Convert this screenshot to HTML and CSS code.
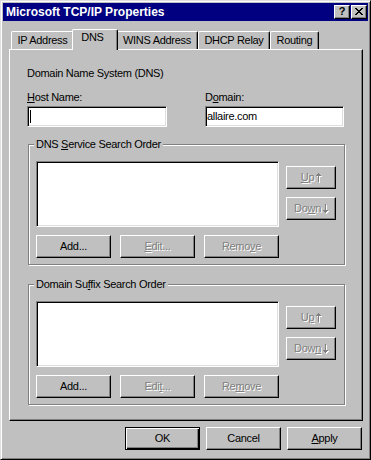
FILE: index.html
```html
<!DOCTYPE html>
<html lang="en">
<head>
  <meta charset="UTF-8" />
  <title>Microsoft TCP/IP Properties</title>
  <link rel="stylesheet" href="styles.css">
</head>
<body>
  <div class="window">
    <div class="titlebar">
      <span class="title">Microsoft TCP/IP Properties</span>
      <div class="title-buttons">
        <span class="title-btn help">?</span>
        <span class="title-btn close">
          <svg width="8" height="7" viewBox="0 0 8 7"><path fill="#000" d="M0 0h2v1H0zM6 0h2v1H6zM1 1h2v1H1zM5 1h2v1H5zM2 2h4v1H2zM3 3h2v1H3zM2 4h4v1H2zM1 5h2v1H1zM5 5h2v1H5zM0 6h2v1H0zM6 6h2v1H6z"/></svg>
        </span>
      </div>
    </div>

    <div class="content">
      <div class="tabs">
        <div class="tab tab-ip">IP Address</div>
        <div class="tab tab-dns active">DNS</div>
        <div class="tab tab-wins">WINS Address</div>
        <div class="tab tab-dhcp">DHCP Relay</div>
        <div class="tab tab-routing">Routing</div>
      </div>

      <div class="panel">
        <div class="section-title">Domain Name System (DNS)</div>
        <div class="fields">
          <div class="field">
            <label><u>H</u>ost Name:</label>
            <div class="sunken edit"><span class="caret"></span></div>
          </div>
          <div class="field">
            <label>D<u>o</u>main:</label>
            <div class="sunken edit">allaire.com</div>
          </div>
        </div>

        <div class="group">
          <span class="group-title">DNS <u>S</u>ervice Search Order</span>
          <div class="group-body">
            <div class="sunken listbox"></div>
            <div class="side-buttons">
              <button class="btn btn-side" disabled><u>U</u>p<svg class="arrow" width="5" height="9" viewBox="0 0 5 9"><path d="M2 0h1v9H2zM1 1h3v1H1zM0 2h5v1H0z"/></svg></button>
              <button class="btn btn-side" disabled>Do<u>w</u>n<svg class="arrow" width="5" height="9" viewBox="0 0 5 9"><path d="M2 0h1v9H2zM1 7h3v1H1zM0 6h5v1H0z"/></svg></button>
            </div>
            <div class="row-buttons">
              <button class="btn">Add...</button>
              <button class="btn" disabled><u>E</u>dit...</button>
              <button class="btn" disabled>Remo<u>v</u>e</button>
            </div>
          </div>
        </div>

        <div class="group group-second">
          <span class="group-title">Domain Su<u>f</u>fix Search Order</span>
          <div class="group-body">
            <div class="sunken listbox"></div>
            <div class="side-buttons">
              <button class="btn btn-side" disabled>U<u>p</u><svg class="arrow" width="5" height="9" viewBox="0 0 5 9"><path d="M2 0h1v9H2zM1 1h3v1H1zM0 2h5v1H0z"/></svg></button>
              <button class="btn btn-side" disabled>Dow<u>n</u><svg class="arrow" width="5" height="9" viewBox="0 0 5 9"><path d="M2 0h1v9H2zM1 7h3v1H1zM0 6h5v1H0z"/></svg></button>
            </div>
            <div class="row-buttons">
              <button class="btn">Add...</button>
              <button class="btn" disabled>Edi<u>t</u>...</button>
              <button class="btn" disabled>Re<u>m</u>ove</button>
            </div>
          </div>
        </div>
      </div>

      <div class="footer">
        <button class="btn default">OK</button>
        <button class="btn">Cancel</button>
        <button class="btn"><u>A</u>pply</button>
      </div>
    </div>
  </div>
</body>
</html>
```

FILE: styles.css
```css
body {
  margin: 0;
  font: 11px/13px "Liberation Sans", Arial, sans-serif;
  letter-spacing: -0.3px;
  color: #000;
  background: #c0c0c0;
}
.window {
  width: 371px;
  height: 460px;
  box-sizing: border-box;
  background: #c0c0c0;
  border: 1px solid;
  border-color: #dfdfdf #000 #000 #dfdfdf;
  box-shadow: inset 1px 1px #fff, inset -1px -1px #808080;
  padding: 2px;
}
.titlebar {
  height: 18px;
  background: #000080;
  color: #fff;
  display: flex;
  align-items: center;
  justify-content: space-between;
  padding: 0 1px 0 3px;
}
.title {
  font-weight: bold;
  font-size: 12px;
  letter-spacing: 0;
}
.title-buttons {
  display: flex;
  gap: 1px;
}
.title-btn {
  width: 16px;
  height: 14px;
  box-sizing: border-box;
  background: #c0c0c0;
  border: 1px solid;
  border-color: #fff #000 #000 #fff;
  box-shadow: inset -1px -1px #808080;
  display: flex;
  align-items: center;
  justify-content: center;
  color: #000;
}
.help {
  font-weight: bold;
  font-size: 11px;
  letter-spacing: 0;
  padding-bottom: 1px;
}
.close svg {
  display: block;
  margin-bottom: 1px;
}
.content {
  padding: 8px 5px 0 6px;
}
.tabs {
  display: flex;
  align-items: flex-end;
  height: 21px;
  padding-left: 2px;
  margin-bottom: -1px;
  position: relative;
  z-index: 1;
}
.tab {
  height: 18px;
  box-sizing: border-box;
  margin-bottom: 1px;
  padding-top: 2px;
  text-align: center;
  background: #c0c0c0;
  border: 1px solid;
  border-color: #fff #000 transparent #fff;
  border-bottom: none;
  border-radius: 2px 2px 0 0;
  box-shadow: inset -1px 0 #808080;
}
.tab.active {
  height: 21px;
  margin: 0 -2px;
  padding-top: 1px;
  padding-right: 5px;
  position: relative;
  z-index: 2;
}
.tab-ip { width: 63px; }
.tab-dns { width: 46px; }
.tab-wins { width: 82px; }
.tab-dhcp { width: 72px; }
.tab-routing { width: 49px; }
.panel {
  border: 1px solid;
  border-color: #fff #000 #000 #fff;
  box-shadow: inset -1px -1px #808080;
  padding: 17px 17px 15px 17px;
}
.fields {
  display: grid;
  grid-template-columns: 140px 139px;
  column-gap: 38px;
  margin-top: 11px;
}
.field {
  display: flex;
  flex-direction: column;
  gap: 2px;
}
.sunken {
  background: #fff;
  border: 1px solid;
  border-color: #808080 #fff #fff #808080;
  box-shadow: inset 1px 1px #000, inset -1px -1px #dfdfdf;
  box-sizing: border-box;
}
.edit {
  height: 21px;
  line-height: 19px;
  padding-left: 1px;
  display: flex;
  align-items: center;
}
.caret {
  width: 1px;
  height: 13px;
  background: #000;
  margin-left: 1px;
}
.group {
  position: relative;
  border: 1px solid #808080;
  box-shadow: inset 1px 1px #fff, 1px 1px #fff;
  padding: 16px 7px 6px;
  margin: 17px 0 0 1px;
}
.group-second {
  margin-top: 19px;
}
.group-title {
  position: absolute;
  top: -7px;
  left: 5px;
  padding: 0 2px;
  background: #c0c0c0;
}
.group-body {
  display: grid;
  grid-template-columns: 243px 50px;
  grid-template-rows: 66px 23px;
  column-gap: 7px;
  row-gap: 8px;
}
.side-buttons {
  display: flex;
  flex-direction: column;
  gap: 8px;
  padding-top: 5px;
}
.row-buttons {
  display: flex;
  gap: 9px;
}
.btn {
  width: 75px;
  height: 23px;
  box-sizing: border-box;
  padding: 0;
  background: #c0c0c0;
  border: 1px solid;
  border-color: #fff #000 #000 #fff;
  box-shadow: inset -1px -1px #808080;
  font: inherit;
  letter-spacing: inherit;
  color: #000;
}
.btn-side {
  width: 50px;
}
.arrow {
  fill: currentColor;
  margin-left: 2px;
  vertical-align: -1px;
}
.btn:disabled {
  color: #808080;
  text-shadow: 1px 1px #fff;
}
.btn:disabled .arrow {
  filter: drop-shadow(1px 1px 0 #fff);
}
.btn.default {
  border-color: #000;
  box-shadow: inset 1px 1px #fff, inset -1px -1px #000, inset -2px -2px #808080;
}
.footer {
  display: flex;
  justify-content: flex-end;
  gap: 6px;
  margin-top: 6px;
  padding-right: 1px;
}
```
